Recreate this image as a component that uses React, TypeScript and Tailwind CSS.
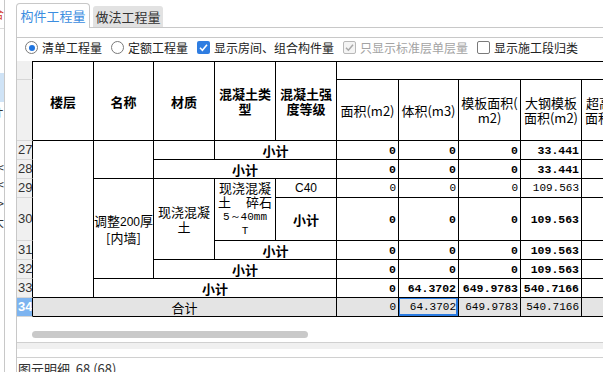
import type { ReactNode } from 'react'

const cell = 'border-r border-b border-black flex items-center justify-center overflow-hidden text-center'
const rowHead = 'bg-[#f0f0f0] border-r border-r-black border-b border-b-[#d6d6d6] overflow-hidden whitespace-nowrap pl-px text-[13px] leading-[18px] text-[#333] font-["Liberation_Sans",sans-serif] flex items-center'
const num = 'border-r border-b border-black flex items-center justify-end pr-[2px] overflow-hidden whitespace-nowrap font-["Liberation_Mono",monospace]'

type NumRow = { row: string; vals: string[]; bold: boolean; gray?: boolean }

// data columns: 面积 / 体积 / 模板面积 / 大钢模板面积 / 超高
const NUMS: NumRow[] = [
  { row: 'row-start-3', vals: ['0', '0', '0', '33.441'], bold: true },
  { row: 'row-start-4', vals: ['0', '0', '0', '33.441'], bold: true },
  { row: 'row-start-5', vals: ['0', '0', '0', '109.563'], bold: false },
  { row: 'row-start-6', vals: ['0', '0', '0', '109.563'], bold: true },
  { row: 'row-start-7', vals: ['0', '0', '0', '109.563'], bold: true },
  { row: 'row-start-8', vals: ['0', '0', '0', '109.563'], bold: true },
  { row: 'row-start-9', vals: ['0', '64.3702', '649.9783', '540.7166'], bold: true },
  { row: 'row-start-10', vals: ['0', '64.3702', '649.9783', '540.7166'], bold: false, gray: true },
]
const NUM_COLS = ['col-start-7', 'col-start-8', 'col-start-9', 'col-start-10', 'col-start-11']

function Radio({ checked, children }: { checked?: boolean; children: ReactNode }) {
  return (
    <div className="flex items-center gap-[4px]">
      <span className="flex h-[13px] w-[13px] items-center justify-center rounded-full border border-[#7a7a7a] bg-white">
        {checked && <span className="h-[6px] w-[6px] rounded-full bg-[#1f74e0]" />}
      </span>
      <span>{children}</span>
    </div>
  )
}

function Check({ state, children }: { state: 'on' | 'off' | 'disabled'; children: ReactNode }) {
  return (
    <div className="flex items-center gap-[4px]">
      {state === 'on' && (
        <span className="flex h-[13px] w-[13px] items-center justify-center rounded-[2px] bg-[#2f7de1]">
          <svg width="11" height="11" viewBox="0 0 11 11">
            <path d="M2 5.8 L4.4 8.2 L9 2.8" fill="none" stroke="#fff" strokeWidth="1.6" />
          </svg>
        </span>
      )}
      {state === 'disabled' && (
        <span className="flex h-[13px] w-[13px] items-center justify-center rounded-[2px] border border-[#b8b8b8] bg-[#f4f4f4]">
          <svg width="11" height="11" viewBox="0 0 11 11">
            <path d="M2 5.8 L4.4 8.2 L9 2.8" fill="none" stroke="#a8a8a8" strokeWidth="1.5" />
          </svg>
        </span>
      )}
      {state === 'off' && <span className="h-[13px] w-[13px] rounded-[2px] border border-[#7a7a7a] bg-white" />}
      <span className={state === 'disabled' ? 'text-[#a3a3a3]' : ''}>{children}</span>
    </div>
  )
}

export default function App() {
  return (
    <div className="flex h-[372px] w-[603px] overflow-hidden bg-white font-['Noto_Sans_CJK_SC',sans-serif] text-[#333]">
      {/* clipped edge of the tree panel on the left */}
      <div className="flex h-full w-[5px] shrink-0 flex-col overflow-hidden border-r border-[#c8c8c8] text-[12px] leading-none">
        <div className="flex h-[29px] shrink-0 items-center justify-end border-b border-[#dcdcdc] text-[#d23a2e]">
          <span className="shrink-0">合</span>
        </div>
        <div className="h-[44px] shrink-0" />
        <div className="h-[29px] shrink-0 bg-[#cfe3f6]" />
        <div className="flex h-[22px] shrink-0 items-center justify-end"><span className="shrink-0">オ</span></div>
        <div className="h-[34px] shrink-0" />
        <div className="flex h-[17px] shrink-0 items-center justify-end"><span className="shrink-0">&lt;</span></div>
        <div className="flex h-[17px] shrink-0 items-center justify-end"><span className="shrink-0">&lt;</span></div>
        <div className="flex h-[22px] shrink-0 items-center justify-end"><span className="shrink-0">&gt;</span></div>
        <div className="flex h-[16px] shrink-0 items-center justify-end"><span className="shrink-0">大</span></div>
      </div>
      <div className="w-[11px] shrink-0" />

      <div className="flex min-w-0 flex-1 flex-col overflow-hidden">
        {/* tabs */}
        <div className="flex h-[28px] shrink-0 items-end border-b border-[#c8c8c8] text-[13px]">
          <div className="-mb-px flex h-[25px] w-[74px] items-center justify-center rounded-t-[4px] border border-b-0 border-[#c8c8c8] bg-white text-[#3b8de0]">
            构件工程量
          </div>
          <div className="ml-[3px] flex h-[21px] w-[70px] items-center justify-center rounded-t-[3px] bg-[#e2e2e2] text-[#333]">
            做法工程量
          </div>
        </div>

        <div className="flex flex-1 flex-col border-l border-[#c8c8c8]">
          <div className="h-[9px] shrink-0" />
          <div className="flex h-[20px] shrink-0 items-center gap-[9px] border-t border-[#c8c8c8] pl-[8px] text-[12px] leading-none whitespace-nowrap text-[#222]">
            <Radio checked>清单工程量</Radio>
            <Radio>定额工程量</Radio>
            <Check state="on">显示房间、组合构件量</Check>
            <Check state="disabled">只显示标准层单层量</Check>
            <Check state="off">显示施工段归类</Check>
          </div>

          {/* quantity grid */}
          <div className="mt-[4px] grid w-max shrink-0 grid-cols-[16px_61px_60px_61px_61px_61px_62px_60px_62px_61px_61px] grid-rows-[19px_61px_19px_19px_19px_43px_19px_19px_19px_19px] text-[13px] leading-[15px] text-black">
            {/* row headers */}
            <div className={`${rowHead} col-start-1 row-start-1`} />
            <div className={`${rowHead} col-start-1 row-start-2`} />
            <div className={`${rowHead} col-start-1 row-start-3`}>27</div>
            <div className={`${rowHead} col-start-1 row-start-4`}>28</div>
            <div className={`${rowHead} col-start-1 row-start-5`}>29</div>
            <div className={`${rowHead} col-start-1 row-start-6`}>30</div>
            <div className={`${rowHead} col-start-1 row-start-7`}>31</div>
            <div className={`${rowHead} col-start-1 row-start-8`}>32</div>
            <div className={`${rowHead} col-start-1 row-start-9`}>33</div>
            <div className={`${rowHead} col-start-1 row-start-10 !bg-[#7db4f0] font-bold !text-white`}>34</div>

            {/* header */}
            <div className={`${cell} col-start-2 row-start-1 row-span-2 border-t font-bold`}>楼层</div>
            <div className={`${cell} col-start-3 row-start-1 row-span-2 border-t font-bold`}>名称</div>
            <div className={`${cell} col-start-4 row-start-1 row-span-2 border-t font-bold`}>材质</div>
            <div className={`${cell} col-start-5 row-start-1 row-span-2 border-t font-bold`}>
              混凝土类<br />型
            </div>
            <div className={`${cell} col-start-6 row-start-1 row-span-2 border-t font-bold`}>
              混凝土强<br />度等级
            </div>
            <div className={`${cell} col-start-7 col-span-5 row-start-1 border-t`} />
            <div className={`${cell} col-start-7 row-start-2 whitespace-nowrap`}>面积(m2)</div>
            <div className={`${cell} col-start-8 row-start-2 whitespace-nowrap`}>体积(m3)</div>
            <div className={`${cell} col-start-9 row-start-2 whitespace-nowrap`}>
              模板面积(<br />m2)
            </div>
            <div className={`${cell} col-start-10 row-start-2 whitespace-nowrap`}>
              大钢模板<br />面积(m2)
            </div>
            <div className={`${cell} col-start-11 row-start-2 whitespace-nowrap`}>
              超高模板<br />面积(m2)
            </div>

            {/* body */}
            <div className={`${cell} col-start-2 row-start-3 row-span-7`} />
            <div className={`${cell} col-start-3 row-start-3 row-span-2`} />
            <div className={`${cell} col-start-4 row-start-3`} />
            <div className={`${cell} col-start-5 col-span-2 row-start-3 font-bold`}>小计</div>
            <div className={`${cell} col-start-4 col-span-3 row-start-4 font-bold`}>小计</div>
            <div className={`${cell} col-start-3 row-start-5 row-span-4 flex-col whitespace-nowrap`}>
              <span>
                调整<span className="font-['Liberation_Sans',sans-serif] text-[12px]">200</span>厚
              </span>
              <span>[内墙]</span>
            </div>
            <div className={`${cell} col-start-4 row-start-5 row-span-3`}>
              现浇混凝<br />土
            </div>
            <div className={`${cell} col-start-5 row-start-5 row-span-2 flex-col leading-[14.5px]`}>
              <span>现浇混凝</span>
              <span className="flex w-full justify-between px-[3px]">
                <span>土</span>
                <span>碎石</span>
              </span>
              <span className="font-['Liberation_Mono',monospace] text-[11px]">5～40mm</span>
              <span className="font-['Liberation_Mono',monospace] text-[11px]">T</span>
            </div>
            <div className={`${cell} col-start-6 row-start-5 font-['Liberation_Sans',sans-serif] text-[12px]`}>C40</div>
            <div className={`${cell} col-start-6 row-start-6 font-bold`}>小计</div>
            <div className={`${cell} col-start-5 col-span-2 row-start-7 font-bold`}>小计</div>
            <div className={`${cell} col-start-4 col-span-3 row-start-8 font-bold`}>小计</div>
            <div className={`${cell} col-start-3 col-span-4 row-start-9 font-bold`}>小计</div>
            <div className={`${cell} col-start-2 col-span-5 row-start-10 bg-[#e4e4e4]`}>合计</div>

            {NUMS.map((r) =>
              NUM_COLS.map((c, i) => (
                <div
                  key={r.row + c}
                  className={`${num} ${r.row} ${c} ${r.bold ? 'text-[11.5px] font-bold' : 'text-[11px]'} ${r.gray ? 'bg-[#e4e4e4]' : ''} ${r.gray && i === 1 ? 'relative' : ''}`}
                >
                  {r.vals[i] ?? ''}
                  {r.gray && i === 1 && (
                    <div className="absolute -top-px -left-px right-0 bottom-0 border-2 border-[#2a7be2]" />
                  )}
                </div>
              )),
            )}
          </div>

          {/* horizontal scrollbar */}
          <div className="mt-[14px] ml-[15px] h-[7px] w-[276px] shrink-0 rounded-full bg-[#c9c9c9]" />
          <div className="mt-[4px] h-[7px] shrink-0 border-t border-[#d0d0d0] bg-[#f0f0f0]" />
          <div className="h-[8px] shrink-0" />
          <div className="shrink-0 border-t border-[#d0d0d0] pt-[3px] pl-px text-[13px] leading-[15px] whitespace-nowrap text-[#333]">
            图元明细&nbsp;&nbsp;68 (68)
          </div>
        </div>
      </div>
    </div>
  )
}
